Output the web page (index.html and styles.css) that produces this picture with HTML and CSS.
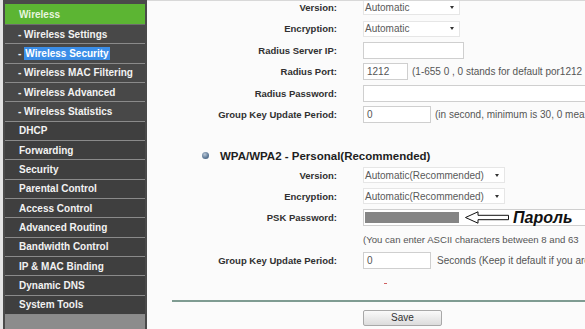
FILE: index.html
```html
<!DOCTYPE html>
<html>
<head>
<meta charset="utf-8">
<link rel="stylesheet" href="styles.css">
</head>
<body>
<div class="page">
  <nav class="menu">
    <div class="item head">Wireless</div>
    <div class="item sub">- Wireless Settings</div>
    <div class="item sub">- <span class="sel">Wireless Security</span></div>
    <div class="item sub">- Wireless MAC Filtering</div>
    <div class="item sub">- Wireless Advanced</div>
    <div class="item sub">- Wireless Statistics</div>
    <div class="item">DHCP</div>
    <div class="item">Forwarding</div>
    <div class="item">Security</div>
    <div class="item">Parental Control</div>
    <div class="item">Access Control</div>
    <div class="item">Advanced Routing</div>
    <div class="item">Bandwidth Control</div>
    <div class="item">IP &amp; MAC Binding</div>
    <div class="item">Dynamic DNS</div>
    <div class="item">System Tools</div>
    <div class="menu-fill"></div>
  </nav>
  <main class="content">
    <div class="form upper">
      <div class="row"><div class="lbl">Version:</div><div class="fld"><div class="select s-short">Automatic<span class="caret"></span></div></div></div>
      <div class="row"><div class="lbl">Encryption:</div><div class="fld"><div class="select s-short">Automatic<span class="caret"></span></div></div></div>
      <div class="row"><div class="lbl">Radius Server IP:</div><div class="fld"><div class="input i-ip"></div></div></div>
      <div class="row"><div class="lbl">Radius Port:</div><div class="fld"><div class="input i-port">1212</div><span class="hint">(1-655 0 , 0 stands for default por1212</span></div></div>
      <div class="row"><div class="lbl">Radius Password:</div><div class="fld"><div class="input i-wide"></div></div></div>
      <div class="row"><div class="lbl">Group Key Update Period:</div><div class="fld"><div class="input i-gk">0</div><span class="hint">(in second, minimum is 30, 0 mea</span></div></div>
    </div>

    <div class="wpa"><span class="radio"></span><span class="wpa-title">WPA/WPA2 - Personal(Recommended)</span></div>

    <div class="form lower">
      <div class="row"><div class="lbl">Version:</div><div class="fld"><div class="select s-long">Automatic(Recommended)<span class="caret"></span></div></div></div>
      <div class="row"><div class="lbl">Encryption:</div><div class="fld"><div class="select s-long">Automatic(Recommended)<span class="caret"></span></div></div></div>
      <div class="row"><div class="lbl">PSK Password:</div><div class="fld"><div class="input i-psk"><span class="mask"></span><svg class="arrow" width="44" height="13" viewBox="0 0 44 13"><path d="M0.5 6.5 L13 0.8 L13 4.3 L43.5 4.3 L43.5 8.7 L13 8.7 L13 12.2 Z" fill="#fff" stroke="#111" stroke-width="1"/></svg><span class="note">Пароль</span></div></div></div>
      <div class="row"><div class="lbl"></div><div class="fld"><span class="hint tight">(You can enter ASCII characters between 8 and 63</span></div></div>
      <div class="row"><div class="lbl">Group Key Update Period:</div><div class="fld"><div class="input i-gk">0</div><span class="hint sec">Seconds (Keep it default if you are</span></div></div>
    </div>

    <div class="dash"></div>
    <div class="footer">
      <div class="rule"></div>
      <button class="save">Save</button>
    </div>
  </main>
</div>
</body>
</html>
```

FILE: styles.css
```css
* { box-sizing: border-box; }

html, body {
  margin: 0;
  padding: 0;
  height: 100%;
  overflow: hidden;
}

body {
  background: #e4e4e4;
  font-family: "Liberation Sans", Arial, sans-serif;
}

.page {
  display: flex;
  height: 329px;
  width: 585px;
  padding-left: 3px;
}

.menu {
  width: 144px;
  flex: none;
  display: flex;
  flex-direction: column;
  border: 2px solid #4a4a4a;
  border-top-width: 4px;
  border-bottom: none;
  background: #3f3f3f;
}

.item {
  height: 19.35px;
  border-bottom: 1px solid #8a8a8a;
  color: #f2f2f2;
  font-size: 10px;
  font-weight: bold;
  padding-left: 14px;
  display: flex;
  align-items: center;
  white-space: nowrap;
}

.item.head {
  background: #5cb533;
  color: #e8f6df;
  border-bottom-color: #6d6d6d;
  height: 21px;
}

.item.sub {
  background: #484848;
  padding-left: 13px;
}

.sel {
  background: #3b8ee8;
  color: #fff;
  padding: 1px 1px;
  margin-left: 3px;
}

.menu-fill {
  flex: 1;
  background: #8c8c8c;
}

.content {
  flex: 1;
  background: #fbfbfb;
  border-top: 1px solid #d8d8d8;
  overflow: hidden;
  display: flex;
  flex-direction: column;
}

.form.upper {
  margin-top: -4.5px;
}

.row {
  display: grid;
  grid-template-columns: 190px 1fr;
  column-gap: 26px;
  height: 21.5px;
  align-items: center;
}

.lower .row {
  height: 21.3px;
}

.lbl {
  text-align: right;
  font-size: 9.5px;
  font-weight: bold;
  color: #303030;
  white-space: nowrap;
}

.fld {
  display: flex;
  align-items: center;
  white-space: nowrap;
  gap: 4px;
  font-size: 10px;
  color: #555;
}

.select {
  height: 16px;
  display: flex;
  align-items: center;
  justify-content: space-between;
  border: 1px solid #e6e6e6;
  padding: 0 5px 0 1px;
  color: #5a5a5a;
  background: #fff;
}

.s-short { width: 97px; }
.s-long { width: 142px; }

.caret {
  width: 0;
  height: 0;
  border-left: 2.5px solid transparent;
  border-right: 2.5px solid transparent;
  border-top: 3px solid #333;
}

.input {
  height: 17px;
  border: 1px solid #cfcfcf;
  background: #fff;
  padding-left: 3px;
  display: flex;
  align-items: center;
  color: #555;
}

.i-ip { width: 101px; }
.i-port { width: 45px; }
.i-wide { width: 240px; }
.i-gk { width: 68px; }
.i-psk {
  width: 240px;
  padding-left: 1px;
  gap: 6px;
}

.hint {
  color: #555;
  font-size: 10px;
}

.hint.tight {
  font-size: 9.6px;
}

.hint.sec { margin-left: 2px; }

.mask {
  width: 94px;
  height: 11px;
  background: #858585;
}

.arrow { flex: none; }

.note {
  font-size: 16px;
  font-weight: bold;
  font-style: italic;
  color: #111;
  margin-left: -2px;
}

.wpa {
  margin-top: 20.5px;
  height: 18.5px;
  display: flex;
  align-items: center;
  padding-left: 55px;
  gap: 11px;
}

.radio {
  width: 7px;
  height: 7px;
  border-radius: 50%;
  background: radial-gradient(circle at 40% 35%, #b9c7d6 0%, #5b7795 60%, #3f5670 100%);
}

.wpa-title {
  font-size: 11.5px;
  font-weight: bold;
  color: #1e1e1e;
  position: relative;
  top: 1px;
  white-space: nowrap;
}

.dash {
  margin-top: 12px;
  margin-left: 237px;
  width: 3px;
  height: 1px;
  background: #d06060;
}

.footer {
  display: flex;
  flex-direction: column;
}

.rule {
  margin-top: 16px;
  margin-left: 25px;
  height: 2px;
  background: #7f9c92;
}

.save {
  margin-top: 8px;
  margin-left: 216px;
  width: 79px;
  height: 16px;
  padding: 0;
  font-family: "Liberation Sans", Arial, sans-serif;
  font-size: 10px;
  color: #333;
  border: 1px solid #a8a8a8;
  border-radius: 2px;
  background: linear-gradient(#fafafa, #dcdcdc);
}
```
